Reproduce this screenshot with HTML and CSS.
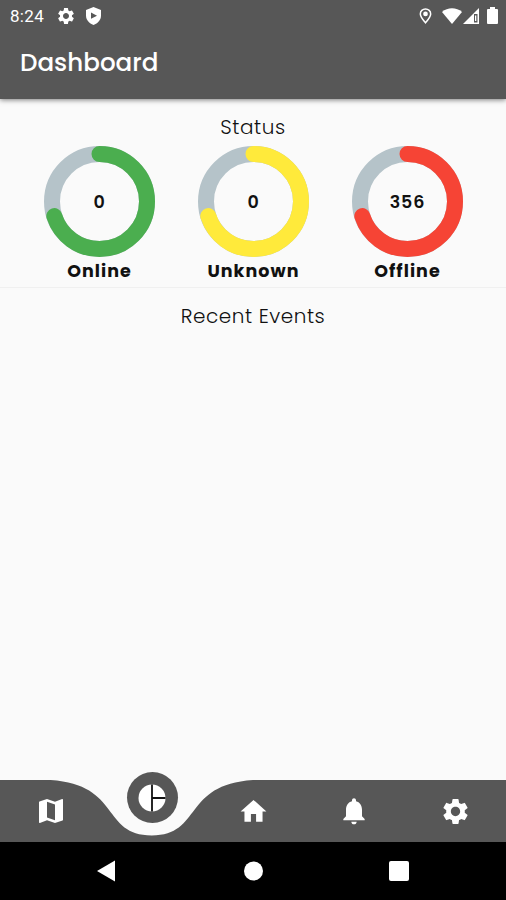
FILE: index.html
```html
<!DOCTYPE html>
<html lang="en">
<head>
  <meta charset="UTF-8" />
  <meta name="viewport" content="width=device-width, initial-scale=1.0" />
  <title>Dashboard</title>
  <link rel="stylesheet" href="styles.css">
</head>
<body>
  <svg class="defs" width="0" height="0">
    <symbol id="gear" viewBox="0 0 24 24">
      <path d="M19.14 12.94c.04-.3.06-.61.06-.94 0-.32-.02-.64-.07-.94l2.03-1.58a.49.49 0 0 0 .12-.61l-1.92-3.32a.488.488 0 0 0-.59-.22l-2.39.96c-.5-.38-1.03-.7-1.62-.94l-.36-2.54a.484.484 0 0 0-.48-.41h-3.84c-.24 0-.43.17-.47.41l-.36 2.54c-.59.24-1.13.57-1.62.94l-2.39-.96c-.22-.08-.47 0-.59.22L2.74 8.87c-.12.21-.08.47.12.61l2.03 1.58c-.05.3-.09.63-.09.94s.02.64.07.94l-2.03 1.58a.49.49 0 0 0-.12.61l1.92 3.32c.12.22.37.29.59.22l2.39-.96c.5.38 1.03.7 1.62.94l.36 2.54c.05.24.24.41.48.41h3.84c.24 0 .44-.17.47-.41l.36-2.54c.59-.24 1.13-.56 1.62-.94l2.39.96c.22.08.47 0 .59-.22l1.92-3.32c.12-.22.07-.47-.12-.61l-2.01-1.58zM12 15.6c-1.98 0-3.6-1.62-3.6-3.6s1.62-3.6 3.6-3.6 3.6 1.62 3.6 3.6-1.62 3.6-3.6 3.6z"/>
    </symbol>
  </svg>

  <header class="header">
    <div class="statusbar">
      <span class="time">8:24</span>
      <svg class="status-gear" width="20" height="20"><use href="#gear"/></svg>
      <svg class="status-shield" width="15" height="18" viewBox="0 0 15 18">
        <path d="M7.5 0L0 3v5.5c0 4.500 3.200 7.800 7.500 9.500 4.300-1.700 7.500-5 7.500-9.500V3z"/>
        <path class="cut" d="M5 5.500l6 3.200-6 3.100z"/>
      </svg>
      <span class="spacer"></span>
      <svg class="status-pin" width="13" height="16" viewBox="0 0 13 17">
        <path class="line" d="M6.500 15.700C3.500 12 1 9.300 1 6.300a5.500 5.300 0 0 1 11 0c0 3-2.500 5.700-5.500 9.400z"/>
        <circle cx="6.500" cy="6.300" r="2.500"/>
      </svg>
      <svg class="status-wifi" width="20" height="16" viewBox="0 0 20 16">
        <path d="M10 16L0 4C5.500-1 14.500-1 20 4z"/>
      </svg>
      <svg class="status-signal" width="16" height="16" viewBox="0 0 16 16">
        <path d="M16 0v16H0z"/>
        <path class="cut" d="M11 6h3.500v8.500H11z"/>
        <path d="M12 7.500h1.300v5.500H12z"/>
      </svg>
      <svg class="status-battery" width="11" height="17" viewBox="0 0 11 17">
        <path d="M3 0h5v2h2a1 1 0 0 1 1 1v13a1 1 0 0 1-1 1H1a1 1 0 0 1-1-1V3a1 1 0 0 1 1-1h2z"/>
      </svg>
    </div>
    <h1>Dashboard</h1>
  </header>

  <main>
    <section class="status">
      <h2>Status</h2>
      <div class="gauges">
        <div class="gauge online">
          <div class="ring">
            <svg width="111" height="111" viewBox="0 0 111 111">
              <circle class="track" cx="55.500" cy="55.500" r="47.500"/>
              <circle class="value" cx="55.500" cy="55.500" r="47.500" pathLength="100"/>
            </svg>
            <span class="count">0</span>
          </div>
          <span class="label">Online</span>
        </div>
        <div class="gauge unknown">
          <div class="ring">
            <svg width="111" height="111" viewBox="0 0 111 111">
              <circle class="track" cx="55.500" cy="55.500" r="47.500"/>
              <circle class="value" cx="55.500" cy="55.500" r="47.500" pathLength="100"/>
            </svg>
            <span class="count">0</span>
          </div>
          <span class="label">Unknown</span>
        </div>
        <div class="gauge offline">
          <div class="ring">
            <svg width="111" height="111" viewBox="0 0 111 111">
              <circle class="track" cx="55.500" cy="55.500" r="47.500"/>
              <circle class="value" cx="55.500" cy="55.500" r="47.500" pathLength="100"/>
            </svg>
            <span class="count">356</span>
          </div>
          <span class="label">Offline</span>
        </div>
      </div>
    </section>
    <section class="events">
      <h2>Recent Events</h2>
    </section>
  </main>

  <nav class="tabs">
    <svg class="curve" width="506" height="62" viewBox="0 0 506 62">
      <path d="M0 0H50.600C121.400 4.600 101.200 55.400 151.800 55.400S182.200 4.600 253 0H506V62H0z"/>
    </svg>
    <a class="tab">
      <svg width="32" height="32" viewBox="0 0 24 24"><path d="M20.500 3l-.16.03L15 5.100 9 3 3.360 4.900c-.21.07-.36.25-.36.480V20.500c0 .28.22.5.5.5l.16-.03L9 18.900l6 2.100 5.640-1.900c.21-.07.36-.25.36-.48V3.500c0-.28-.22-.5-.5-.5zM15 19l-6-2.110V5l6 2.110V19z"/></svg>
    </a>
    <a class="tab active">
      <span class="bubble">
        <svg width="28" height="28" viewBox="0 0 28 28">
          <circle cx="14" cy="14" r="13.500"/>
          <path class="split" d="M14 .5v27M14 14h13.500"/>
        </svg>
      </span>
    </a>
    <a class="tab">
      <svg width="31" height="31" viewBox="0 0 24 24"><path d="M10 20v-6h4v6h5v-8h3L12 3 2 12h3v8z"/></svg>
    </a>
    <a class="tab">
      <svg width="32" height="32" viewBox="0 0 24 24"><path d="M12 22c1.100 0 2-.9 2-2h-4c0 1.100.89 2 2 2zm6-6v-5c0-3.070-1.640-5.640-4.500-6.320V4c0-.83-.67-1.500-1.500-1.500s-1.500.67-1.500 1.500v.68C7.630 5.360 6 7.920 6 11v5l-2 2v1h16v-1l-2-2z"/></svg>
    </a>
    <a class="tab">
      <svg width="31" height="31"><use href="#gear"/></svg>
    </a>
  </nav>

  <footer class="sysnav">
    <svg width="20" height="22" viewBox="0 0 20 22"><path d="M19 .5v21L1 11z"/></svg>
    <svg width="20" height="20" viewBox="0 0 20 20"><circle cx="10.500" cy="10" r="9.500"/></svg>
    <svg width="20" height="20" viewBox="0 0 20 20"><rect width="20" height="20" rx="2"/></svg>
  </footer>
</body>
</html>
```

FILE: styles.css
```css
* {
  box-sizing: border-box;
}
body {
  margin: 0;
  height: 900px;
  display: flex;
  flex-direction: column;
  background: #fafafa;
  color: #111;
  font-family: Poppins, Inter, sans-serif;
  overflow: hidden;
}
svg {
  display: block;
  fill: #fff;
}
.defs {
  position: absolute;
}
h1, h2 {
  margin: 0;
}
.header {
  height: 99px;
  flex: none;
  background: #575757;
  color: #fff;
  box-shadow: 0 1px 5px rgba(0,0,0,0.5);
}
.statusbar {
  display: flex;
  align-items: center;
  height: 31px;
  padding: 0 8px 0 10px;
}
.time {
  width: 46px;
  font: 17px/32px Roboto, sans-serif;
  letter-spacing: 0.3px;
}
.status-shield {
  margin-left: 10px;
}
.spacer {
  flex: 1;
}
.status-pin {
  margin-right: -1px;
}
.status-wifi {
  margin-left: 11px;
}
.status-signal {
  margin-left: 1px;
}
.status-battery {
  margin-left: 8px;
}
.cut {
  fill: #575757;
}
.line {
  fill: none;
  stroke: #fff;
  stroke-width: 1.6;
}
h1 {
  padding-left: 20px;
  font-size: 24.6px;
  font-weight: 500;
  line-height: 64px;
}
main {
  flex: 1;
}
h2 {
  text-align: center;
  font-size: 20px;
  font-weight: 300;
  line-height: 30px;
  letter-spacing: 0.55px;
}
.status {
  height: 189px;
  padding-top: 13px;
  border-bottom: 1px solid #f0f0f0;
}
.events {
  padding-top: 13px;
}
.gauges {
  display: flex;
  justify-content: center;
  gap: 43px;
  margin-top: 4px;
  padding-left: 1px;
}
.gauge {
  width: 111px;
  text-align: center;
}
.ring {
  display: grid;
  place-items: center;
}
.ring svg, .count {
  grid-area: 1 / 1;
}
.ring circle {
  fill: none;
  stroke-width: 16;
}
.track {
  stroke: #b5c3c9;
}
.value {
  stroke-dasharray: 70 100;
  stroke-linecap: round;
  transform: rotate(-90deg);
  transform-origin: center;
}
.online .value {
  stroke: #4bae4f;
}
.unknown .value {
  stroke: #ffea3b;
}
.offline .value {
  stroke: #f64435;
}
.count, .label {
  font-size: 17.5px;
}
.count {
  font-weight: 600;
  line-height: 24px;
  letter-spacing: 0.9px;
}
.label {
  display: block;
  font-weight: 700;
  line-height: 29px;
  letter-spacing: 1.05px;
}
.tabs {
  position: relative;
  display: flex;
  height: 62px;
}
.curve {
  position: absolute;
  inset: 0;
  fill: #575757;
}
.tab {
  position: relative;
  flex: 1;
  display: flex;
  align-items: center;
  justify-content: center;
}
.active {
  align-items: flex-start;
}
.bubble {
  flex: none;
  display: flex;
  align-items: center;
  justify-content: center;
  width: 51px;
  height: 51px;
  margin: -8px 0 0 1px;
  border-radius: 50%;
  background: #575757;
}
.split {
  fill: none;
  stroke: #111;
  stroke-width: 1.8;
}
.sysnav {
  display: flex;
  align-items: center;
  justify-content: space-between;
  height: 58px;
  padding: 0 97px 0 96px;
  background: #000;
}
```
